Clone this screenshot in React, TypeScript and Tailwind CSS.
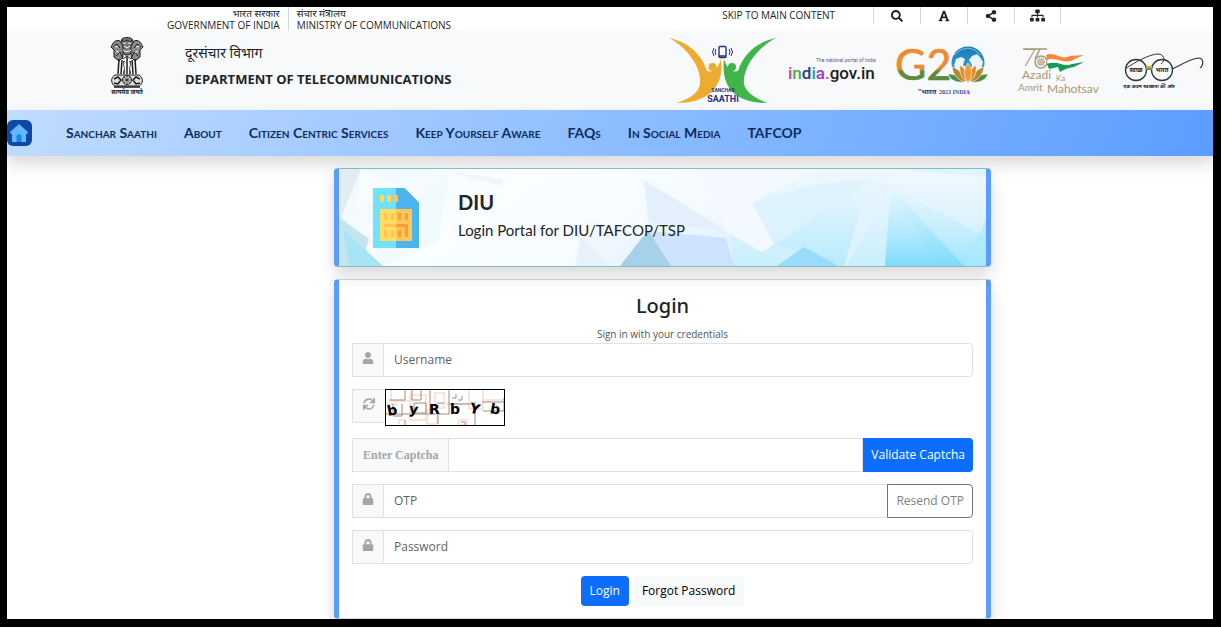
import type { ReactNode } from "react";
import { FaFont, FaLock, FaSearch, FaShareAlt, FaSitemap, FaSync, FaUser } from "react-icons/fa";

const navItems = [
  "Sanchar Saathi",
  "About",
  "Citizen Centric Services",
  "Keep Yourself Aware",
  "FAQs",
  "In Social Media",
  "TAFCOP",
];

const tools = [
  { label: "Search", icon: <FaSearch size={12} /> },
  { label: "Text size", icon: <FaFont size={12} /> },
  { label: "Share", icon: <FaShareAlt size={12} /> },
  { label: "Sitemap", icon: <FaSitemap size={15} /> },
];

function Emblem() {
  return (
    <svg width="34" height="58" viewBox="0 0 34 58" fill="none" stroke="#1c1c1c" role="img" aria-label="State Emblem of India">
      {/* three lions */}
      <path d="M12 2c2-2 8-2 10 0l2 5-1 7-4 4h-4l-4-4-1-7z" fill="#777" />
      <path d="M10 4C5 2 3 6 1 10l3 3v7l5 4 4-4V9z" fill="#8a8a8a" />
      <path d="M24 4c5-2 7 2 9 6l-3 3v7l-5 4-4-4V9z" fill="#8a8a8a" />
      <path d="M13 6h3m2 0h3M14 9l3 2 3-2M13 13c2 2 6 2 8 0M4 9l4 1M30 9l-4 1M6 14l4 2M28 14l-4 2" stroke="#fff" />
      <path d="M12 3l2 2 3-2 3 2 2-2M3 10l4-3 3 4M31 10l-4-3-3 4M6 19l4-4 3 7 4-3 4 3 3-7 4 4" />
      <path d="M9 22l-1 15M12 23l-1 14M14 24v13M17 20v17M20 24v13M22 23l1 14M25 22l1 15" strokeWidth="1.5" />
      <path d="M15 25l-2 9M19 25l2 9" stroke="#fff" />
      {/* abacus */}
      <path d="M5 38c-5 3-4 9 0 11h24c4-2 5-8 0-11z" fill="#ddd" />
      <circle cx="17" cy="43" r="4.500" />
      <path d="M17 39v8M13 43h8M14 40l6 6M20 40l-6 6" strokeWidth=".7" />
      <path d="M4 42l4-2 3 3-3 4-4-1M30 42l-4-2-3 3 3 4 4-1M4 50h26" strokeWidth="1.5" />
      <text x="17" y="57" fontSize="6" fontWeight="700" textAnchor="middle" fill="#222" stroke="none">सत्यमेव जयते</text>
    </svg>
  );
}

function SancharSaathiLogo() {
  return (
    <svg width="107" height="68" viewBox="0 0 107 68" role="img" aria-label="Sanchar Saathi">
      <path d="M0 1C20 5 33 18 38 34c6 2 11-2 14-12 2 16-2 28-13 36-8 5-18 8-31 8 14-5 22-11 23-19C33 31 18 10 0 1z" fill="#edac31" />
      <path d="M107 1C87 5 74 18 69 34c-6 2-11-2-14-12-2 16 2 28 12 36 9 6 19 8 32 8-14-5-22-11-24-19C73 31 89 10 107 1z" fill="#40b549" />
      <circle cx="43.500" cy="30" r="4" fill="#edac31" />
      <circle cx="63" cy="30" r="4" fill="#40b549" />
      <g fill="none" stroke="#2b2f7f">
        <rect x="50" y="9.500" width="7" height="11" rx="1" strokeWidth="1.400" />
        <path d="M47 12q-2 3 0 6M60 12q2 3 0 6M45 11q-3 4 0 8M62 11q3 4 0 8" />
        <path d="M50 19h7" strokeWidth="1.500" />
      </g>
      <text x="54" y="55" textAnchor="middle" fontFamily="Roboto" fontSize="5" fontWeight="700" fill="#2b2f7f">SANCHAR</text>
      <text x="54" y="65" textAnchor="middle" fontFamily="Roboto" fontSize="9" fontWeight="700" fill="#2b2f7f">SAATHI</text>
    </svg>
  );
}

function IndiaGovLogo() {
  return (
    <svg width="90" height="68" viewBox="0 0 90 68" role="img" aria-label="india.gov.in" fontFamily="Roboto">
      <text x="28" y="25" fontSize="5" fill="#555a94">The national portal of India</text>
      <text x="0" y="42" fontSize="17" fontWeight="500" fill="#1c1c1c">
        <tspan fill="#e2399b">i</tspan>
        <tspan fill="#3bb54a">n</tspan>
        <tspan fill="#2b3990">d</tspan>
        <tspan fill="#18a5a0">i</tspan>
        <tspan fill="#a238c8">a</tspan>
        <tspan fill="#e2399b">.</tspan>
        <tspan>gov.in</tspan>
      </text>
    </svg>
  );
}

function G20Logo() {
  return (
    <svg width="102" height="68" viewBox="0 0 102 68" role="img" aria-label="G20 India">
      <defs>
        <linearGradient id="g20" x1="0" y1="0" x2="0" y2="1">
          <stop offset=".6" stopColor="#f08a2c" />
          <stop offset=".66" stopColor="#5b8a3a" />
        </linearGradient>
        <linearGradient id="globe" x1="0" y1="0" x2="0" y2="1">
          <stop stopColor="#1b75b5" />
          <stop offset="1" stopColor="#46b0e0" />
        </linearGradient>
      </defs>
      <text x="5" y="43" fontFamily="Lato" fontSize="43" fill="url(#g20)" stroke="url(#g20)" strokeWidth=".6">G2</text>
      <circle cx="78" cy="26" r="16.500" fill="url(#globe)" />
      <path d="M66 22l5-2 4 2-2 6 4 3-2 8-6-3-5-7zM79 23l3-4 5-2 3 3 3 5-2 8-4 4-6-4 1-5z" fill="#e9f6fc" />
      <path d="M64 18q14-14 27 0" fill="none" stroke="#7cc8ea" />
      <g stroke="#fff" strokeWidth=".6">
        <path d="M58 37c7 0 12 2 16 8-8 1-14-2-16-8zM98 37c-7 0-12 2-16 8 8 1 14-2 16-8z" fill="#4d8c45" />
        <path d="M62 30c7 2 12 7 14 15-8-1-13-7-14-15zM94 30c-7 2-12 7-14 15 8-1 13-7 14-15z" fill="#b78a32" />
        <path d="M70 28c6 4 8 10 7 17-6-4-8-10-7-17zM86 28c-6 4-8 10-7 17 6-4 8-10 7-17z" fill="#df8b2c" />
        <path d="M78 26c5 7 5 13 0 20-5-7-5-13 0-20z" fill="#ef9a38" />
      </g>
      <text x="28" y="57" fontSize="7" fontWeight="700" fill="#2b3176">"भारत</text>
      <text x="49" y="57" fontFamily="Liberation Serif" fontSize="6" fontWeight="700" fill="#454a84">2023 INDIA</text>
    </svg>
  );
}

function AzadiLogo() {
  return (
    <svg width="100" height="68" viewBox="0 0 100 68" fontFamily="Lato" fill="#a99673" role="img" aria-label="Azadi Ka Amrit Mahotsav">
      <text x="18" y="29" fontSize="24" fontStyle="italic" fontWeight="300">7</text>
      <path d="M19 12h24M36 12l-5 10" fill="none" stroke="#a99673" strokeWidth="1.500" />
      <circle cx="37" cy="25" r="6" fill="#f8f9fb" stroke="#a99673" strokeWidth="1.500" />
      <circle cx="37" cy="25" r="3.500" fill="#c9bea9" stroke="#8c7a5a" strokeWidth=".8" strokeDasharray="1 1" />
      <path d="M42 18c10-4 14 6 24 1l14-1-9 4c-10 8-16-2-28 1z" fill="#f5883c" />
      <path d="M43 23c10-4 18 6 28-1l8-2-6 5c-10 7-18-2-29 2z" fill="#fff" />
      <path d="M43 27c12-4 16 4 25 0l12-2-10 5c-8 1-10 3-14 5l-2-5-9 2z" fill="#169b56" />
      <text x="18" y="42" fontSize="12">Azadi</text>
      <text x="52" y="44" fontSize="8">Ka</text>
      <text x="14" y="54" fontSize="10">Amrit</text>
      <text x="43" y="56" fontSize="12">Mahotsav</text>
    </svg>
  );
}

function SwachhBharatLogo() {
  return (
    <svg width="88" height="68" viewBox="0 0 88 68" fill="none" stroke="#333" role="img" aria-label="Swachh Bharat">
      <circle cx="20" cy="33" r="10.500" strokeWidth="1.300" />
      <circle cx="46" cy="33" r="10.500" strokeWidth="1.300" />
      <path d="M30 30h6" stroke="#ef9a3c" strokeWidth="2" />
      <path d="M30 32h6" stroke="#3fa15b" strokeWidth="2" />
      <path d="M9 32c10-7 25-15 33-15 6 0 8 6 3 10" />
      <path d="M56 32c9-4 18-10 26-11 6 0 6 7 2 10" strokeWidth="1.200" />
      <g fill="#222" stroke="none" fontWeight="700" textAnchor="middle">
        <text x="20" y="35" fontSize="6">स्वच्छ</text>
        <text x="46" y="35" fontSize="6">भारत</text>
        <text x="33" y="51" fontSize="5">एक कदम स्वच्छता की ओर</text>
      </g>
    </svg>
  );
}

function SimIcon() {
  return (
    <svg width="46" height="60" viewBox="0 0 46 60" shapeRendering="crispEdges" aria-hidden="true">
      <path d="M0 0h23v60H0z" fill="#72e1fa" />
      <path d="M23 0h8l15 15v45H23z" fill="#4cb5f0" />
      <path d="M7 7h4v7H7zM14 7h4v7h-4z" fill="#ffd95c" />
      <path d="M21 7h4v7h-4z" fill="#ffc54e" />
      <path d="M7 21h16v32H7z" fill="#ffdc64" />
      <path d="M23 21h16v32H23z" fill="#ffc65c" />
      <path d="M11 25h3v7h-3zM18 25h3v7h-3zM11 42h3v7h-3zM18 42h3v7h-3zM11 36h12v3H11z" fill="#ffc54e" />
      <path d="M25 25h3v7h-3zM32 25h3v7h-3zM23 36h12v13h-3V39h-9zM25 42h3v7h-3z" fill="#ff9d33" />
    </svg>
  );
}

function BannerArt() {
  return (
    <svg className="absolute inset-0 h-full w-full" viewBox="0 0 647 97" preserveAspectRatio="none" aria-hidden="true">
      <defs>
        <linearGradient id="ice" x1="0" y1="0" x2="1" y2="0.200">
          <stop stopColor="#eef8fc" />
          <stop offset=".3" stopColor="#fbfeff" />
          <stop offset=".6" stopColor="#f4faff" />
          <stop offset="1" stopColor="#d5f2fe" />
        </linearGradient>
        <linearGradient id="fall" x1="0" y1="0" x2="0" y2="1">
          <stop stopColor="#c5effd" stopOpacity=".1" />
          <stop offset="1" stopColor="#7edbfc" />
        </linearGradient>
        <linearGradient id="lilac" x1="0" y1="0" x2="1" y2="1">
          <stop stopColor="#edf5fe" />
          <stop offset="1" stopColor="#bedcfd" />
        </linearGradient>
        <linearGradient id="haze" x1="0" y1="0" x2="0" y2="1">
          <stop stopColor="#f1f8fe" />
          <stop offset="1" stopColor="#c9effd" />
        </linearGradient>
      </defs>
      <path d="M0 0h647v97H0z" fill="url(#ice)" />
      <path d="M0 0h22l-6 14-16 40z" fill="#e3edf1" />
      <path d="M22 0l40 15-46 28z" fill="#f7fcfe" />
      <path d="M0 48l30 22-8 27H0z" fill="#c5e6f1" />
      <path d="M4 60l40 37H10z" fill="#a7e4f5" />
      <path d="M110 3l53 7v7z" fill="#f1f5f8" />
      <path d="M30 72l80-69-10 70-56 24z" fill="#f1fbfd" />
      <path d="M305 11l85 53 7 33H236l12-47 62 20z" fill="url(#lilac)" opacity=".2" />
      <path d="M305 11l82 50-77-7z" fill="#e4effc" />
      <path d="M310 62l77 7 8 28H300z" fill="#c7dffd" opacity=".8" />
      <path d="M281 97l28-36 23 36z" fill="#a6d1e9" />
      <path d="M236 97l6-29 28 29z" fill="#e6f1fb" />
      <path d="M375 0h272v97H395l-3-24z" fill="url(#haze)" />
      <path d="M413 34l64-19 54-5-95 68z" fill="#dcf3fe" opacity=".8" />
      <path d="M360 0h115l-62 34 22 41-12 8-35-20z" fill="#f3f9ff" />
      <path d="M531 10l-26 87-70-22z" fill="url(#fall)" opacity=".25" />
      <path d="M531 10l21 8-45 79h-2z" fill="#e4f4fe" opacity=".7" />
      <path d="M552 18l73 79h-79z" fill="url(#fall)" />
      <path d="M552 18l95 50v29h-48z" fill="url(#fall)" opacity=".55" />
      <path d="M647 50v47h-20z" fill="#aae9fd" opacity=".6" />
      <path d="M438 97l27-19 35 19z" fill="#98dbfb" />
      <path d="M552 0h95v8z" fill="#dff5fc" />
    </svg>
  );
}

function CaptchaImage() {
  return (
    <svg className="-ml-px border border-black bg-white" width="120" height="37" viewBox="0 0 118 35" role="img" aria-label="Captcha code">
      <g fill="none" stroke="#fbdccb" strokeWidth="1.500">
        <path d="M5 0v11h20V0M24 5h16v25H24zM49 3h9v15H49zM83 0v19h14V0M41 20h10v14H41zM13 34v-4h6M0 14h12M60 14h22M73 30h8v5h-8zM97 10h20" />
      </g>
      <g fill="none" stroke="#a28a84">
        <path d="M3 10h16V0M26 0v10h9V0M7 14v12h9V14M0 24h63V0M44 24V0M28 13h12v10H28zM51 13h7M66 8h4v-4M72 10h4V6M89 35V12M96 12h22M97 21h21V8M52 25v9M63 14h25M19 30v5M75 32h4v3" />
      </g>
      <g fontFamily="DejaVu Sans" fontSize="14" fontWeight="700">
        <text x="1" y="25" transform="rotate(-12 6 20)">b</text>
        <text x="23" y="24" transform="rotate(8 28 20)">y</text>
        <text x="43" y="24">R</text>
        <text x="64" y="24">b</text>
        <text x="84" y="24" transform="rotate(14 90 18)">Y</text>
        <text x="104" y="24" transform="rotate(10 110 20)">b</text>
      </g>
    </svg>
  );
}

function Addon({ id, label, children }: { id: string; label: string; children: ReactNode }) {
  return (
    <label htmlFor={id} aria-label={label} className="flex w-8 shrink-0 items-center justify-center border border-[#dee2e6] bg-[#f8f9fb] pb-1 text-[#a5a5a5]">
      {children}
    </label>
  );
}

const field =
  "min-w-0 flex-1 -ml-px border border-[#dee2e6] bg-white px-[10px] text-xs text-[#212529] placeholder:text-[#5c6369] outline-none";

export default function App() {
  return (
    <div className="border-t-[7px] border-r-[8px] border-b-[8px] border-l-[7px] border-black bg-white font-['Open_Sans','Noto_Sans',sans-serif] text-[#212529]">
      <div className="flex h-6 justify-between pr-[152px] pl-40 text-[10px] leading-3">
        <div className="flex">
          <div className="border-r border-gray-300 pr-2 text-right">
            <div>भारत सरकार</div>
            <div>GOVERNMENT OF INDIA</div>
          </div>
          <div className="pl-2">
            <div>संचार मंत्रालय</div>
            <div>MINISTRY OF COMMUNICATIONS</div>
          </div>
        </div>
        <div className="flex h-[17px]">
          <a href="#login" className="pt-0.5 pr-[38px]">SKIP TO MAIN CONTENT</a>
          {tools.map((tool) => (
            <button key={tool.label} aria-label={tool.label} className="flex w-[47px] items-center justify-center border-l border-gray-300 last:border-r">
              {tool.icon}
            </button>
          ))}
        </div>
      </div>

      <header className="flex h-[79px] items-start justify-between bg-[#f8f9fb] pr-[9px] pl-[103px] pt-1.5">
        <div className="flex gap-[41px]">
          <Emblem />
          <div className="pt-[3px] text-sm leading-[26px]">
            <div>दूरसंचार विभाग</div>
            <div className="text-[13px] font-bold">DEPARTMENT OF TELECOMMUNICATIONS</div>
          </div>
        </div>
        <div className="flex gap-3">
          <SancharSaathiLogo />
          <IndiaGovLogo />
          <G20Logo />
          <AzadiLogo />
          <SwachhBharatLogo />
        </div>
      </header>

      <nav className="flex h-[46px] items-center bg-linear-110 from-[#c0dcff] to-[#5a9dff] shadow-[0_8px_16px_rgba(0,0,0,0.15)]">
        <a href="#home" aria-label="Home">
          <svg width="25" height="26" viewBox="0 0 25 26">
            <rect width="25" height="26" rx="6" fill="#0f48a5" />
            <path d="M12 4l9 8-1 2h-1v8H5v-8H4l-1-2z" fill="#64b5f9" />
            <path d="M9.500 22v-6q2.500-4 5 0v6z" fill="#1a86ea" />
          </svg>
        </a>
        <div className="ml-[34px] flex gap-[27px] font-['Lato',sans-serif] text-sm font-bold whitespace-nowrap text-[#0d2c61] [font-variant-caps:small-caps]">
          {navItems.map((item) => (
            <a key={item} href="#">{item}</a>
          ))}
        </div>
      </nav>

      <main className="grid grid-cols-[327fr_657fr_222fr] pt-3">
        <div className="col-start-2 flex flex-col gap-3">
          <section className="relative flex h-[99px] gap-[39px] overflow-hidden rounded border-x-[5px] border-y border-x-[#5a9dff] border-y-[#84bccb] pt-[19px] pl-[34px] shadow-[0_8px_16px_rgba(0,0,0,0.15)]">
            <BannerArt />
            <div className="relative">
              <SimIcon />
            </div>
            <div className="relative font-['Lato',sans-serif] leading-7">
              <h1 className="text-xl font-bold">DIU</h1>
              <p className="text-[15px]">Login Portal for DIU/TAFCOP/TSP</p>
            </div>
          </section>

          <form id="login" className="rounded border-x-[5px] border-y border-x-[#5a9dff] border-y-gray-300 bg-white px-[13px] py-3 shadow-[0_8px_16px_rgba(0,0,0,0.15)]">
            <h2 className="text-center font-['Noto_Sans',sans-serif] text-xl leading-7 font-medium">Login</h2>
            <p className="pt-[5px] text-center text-[10px] leading-[18px] text-[#50565c]">Sign in with your credentials</p>
            <div className="flex flex-col gap-3 text-xs">
              <div className="flex h-[34px]">
                <Addon id="username" label="Username"><FaUser size={12} /></Addon>
                <input id="username" className={`${field} rounded-r`} placeholder="Username" />
              </div>
              <div className="flex items-start">
                <button type="button" aria-label="Refresh captcha" className="flex h-[34px] w-[34px] items-center justify-center border border-[#dee2e6] bg-[#f8f9fb] pb-1 text-[#a5a5a5]">
                  <FaSync size={12} />
                </button>
                <CaptchaImage />
              </div>
              <div className="flex h-[34px]">
                <label htmlFor="captcha" className="flex items-center border border-[#dee2e6] bg-[#f8f9fb] px-[10px] font-['Liberation_Serif',serif] text-xs font-bold text-[#a5a5a5]">
                  Enter Captcha
                </label>
                <input id="captcha" className={field} />
                <button type="button" className="rounded-r bg-[#0d6efd] px-2 text-white">Validate Captcha</button>
              </div>
              <div className="flex h-[34px]">
                <Addon id="otp" label="OTP"><FaLock size={12} /></Addon>
                <input id="otp" className={field} placeholder="OTP" />
                <button type="button" className="-ml-px rounded-r border border-[#6c757d] px-2 text-[#7b8188]">Resend OTP</button>
              </div>
              <div className="flex h-[34px]">
                <Addon id="password" label="Password"><FaLock size={12} /></Addon>
                <input id="password" type="password" className={`${field} rounded-r`} placeholder="Password" />
              </div>
              <div className="flex h-[30px] justify-center gap-1">
                <button type="submit" className="rounded bg-[#0d6efd] px-[9px] text-white">Login</button>
                <button type="button" className="rounded bg-[#f8f9fb] px-[9px] text-black">Forgot Password</button>
              </div>
            </div>
          </form>
        </div>
      </main>
    </div>
  );
}
